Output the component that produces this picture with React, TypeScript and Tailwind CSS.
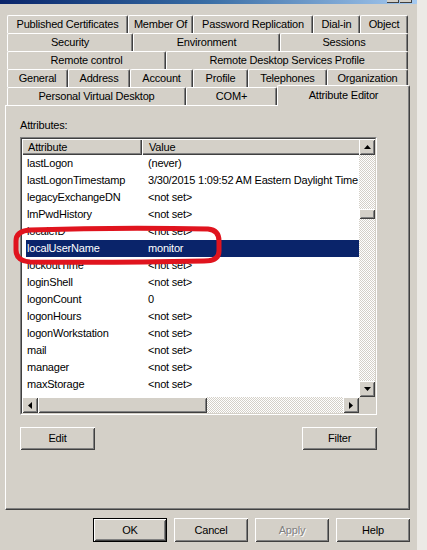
import React from "react";

const raised =
  "bg-[#d4d0c8] shadow-[inset_1px_1px_0_#ffffff,inset_-1px_-1px_0_#404040,inset_2px_2px_0_#d4d0c8,inset_-2px_-2px_0_#808080]";
const checker =
  "bg-[image:repeating-conic-gradient(#ffffff_0%_25%,#d4d0c8_0%_50%)] bg-[length:2px_2px]";
const tab =
  "h-[18px] shrink-0 flex items-center justify-center whitespace-nowrap border-t border-l border-white border-r border-r-[#404040] shadow-[inset_-1px_0_0_#808080] rounded-t-[2px]";

const rows: [string, string][] = [
  ["lastLogon", "(never)"],
  ["lastLogonTimestamp", "3/30/2015 1:09:52 AM Eastern Daylight Time"],
  ["legacyExchangeDN", "<not set>"],
  ["lmPwdHistory", "<not set>"],
  ["localeID", "<not set>"],
  ["localUserName", "monitor"],
  ["lockoutTime", "<not set>"],
  ["loginShell", "<not set>"],
  ["logonCount", "0"],
  ["logonHours", "<not set>"],
  ["logonWorkstation", "<not set>"],
  ["mail", "<not set>"],
  ["manager", "<not set>"],
  ["maxStorage", "<not set>"],
  ["mhsORAddress", "<not set>"],
];

function Up() {
  return (
    <svg width="7" height="4" viewBox="0 0 7 4">
      <polygon points="0,4 7,4 3.5,0" fill="#000" />
    </svg>
  );
}
function Down() {
  return (
    <svg width="7" height="4" viewBox="0 0 7 4">
      <polygon points="0,0 7,0 3.5,4" fill="#000" />
    </svg>
  );
}
function Left() {
  return (
    <svg width="4" height="7" viewBox="0 0 4 7">
      <polygon points="4,0 4,7 0,3.5" fill="#000" />
    </svg>
  );
}
function Right() {
  return (
    <svg width="4" height="7" viewBox="0 0 4 7">
      <polygon points="0,0 0,7 4,3.5" fill="#000" />
    </svg>
  );
}

export default function App() {
  return (
    <div className="w-[427px] h-[550px] bg-[#eceae6] flex overflow-hidden font-['Liberation_Sans',Arial,sans-serif] text-[11px] tracking-[-0.2px] leading-none text-black">
      <div className="relative w-[417px] h-[550px] shrink-0 bg-[#d4d0c8] flex flex-col">
        {/* title strip */}
        <div className="h-[4px] flex bg-linear-to-r from-[#0a246a] via-[#3a6ea5] to-[#a6caf0]">
          <div className="flex-1" />
          <div className="w-[12px] h-[3px] bg-[#d4d0c8] border-r border-b border-[#404040] mr-[1px]" />
          <div className="w-[12px] h-[3px] bg-[#d4d0c8] border-r border-b border-[#404040] mr-[5px]" />
        </div>

        {/* tab rows */}
        <div className="mt-[11px] pl-[7px] flex flex-col">
          <div className="flex h-[18px]">
            <div className={`${tab} w-[121px]`}>Published Certificates</div>
            <div className={`${tab} w-[65px]`}>Member Of</div>
            <div className={`${tab} w-[120px]`}>Password Replication</div>
            <div className={`${tab} w-[47px]`}>Dial-in</div>
            <div className={`${tab} w-[48px]`}>Object</div>
          </div>
          <div className="flex h-[18px]">
            <div className={`${tab} w-[126px]`}>Security</div>
            <div className={`${tab} w-[147px]`}>Environment</div>
            <div className={`${tab} w-[128px]`}>Sessions</div>
          </div>
          <div className="flex h-[18px]">
            <div className={`${tab} w-[159px]`}>Remote control</div>
            <div className={`${tab} w-[242px]`}>Remote Desktop Services Profile</div>
          </div>
          <div className="flex h-[18px]">
            <div className={`${tab} w-[61px]`}>General</div>
            <div className={`${tab} w-[62px]`}>Address</div>
            <div className={`${tab} w-[63px]`}>Account</div>
            <div className={`${tab} w-[55px]`}>Profile</div>
            <div className={`${tab} w-[79px]`}>Telephones</div>
            <div className={`${tab} w-[81px]`}>Organization</div>
          </div>
          <div className="flex h-[18px]">
            <div className={`${tab} w-[179px]`}>Personal Virtual Desktop</div>
            <div className={`${tab} w-[91px]`}>COM+</div>
            <div className="relative z-10 -top-[2px] h-[21px] w-[133px] shrink-0 flex justify-center pt-[4px] bg-[#d4d0c8] border-t border-l border-white border-r border-r-[#404040] shadow-[inset_-1px_0_0_#808080] rounded-t-[2px]">
              Attribute Editor
            </div>
          </div>
        </div>

        {/* panel */}
        <div className="ml-[5px] w-[405px] h-[405px] shrink-0 flex flex-col pl-[14px] border-t border-l border-white border-r border-b border-r-[#404040] border-b-[#404040] shadow-[inset_-1px_-1px_0_#808080]">
          <div className="mt-[13px] h-[13px] leading-[13px]">Attributes:</div>

          {/* listbox */}
          <div className="mt-[5px] w-[357px] h-[278px] border border-t-[#808080] border-l-[#808080] border-r-white border-b-white">
            <div className="w-full h-full border border-t-[#404040] border-l-[#404040] border-r-[#d4d0c8] border-b-[#d4d0c8] flex flex-col">
              <div className="flex h-[258px]">
                <div className="w-[337px] h-[258px] bg-white overflow-hidden flex flex-col">
                  <div className="flex h-[16px] shrink-0">
                    <div className="w-[120px] h-[16px] shrink-0 flex items-center pl-[6px] bg-[#d4d0c8] shadow-[inset_1px_1px_0_#ffffff,inset_-1px_-1px_0_#404040,inset_-2px_-2px_0_#808080]">
                      Attribute
                    </div>
                    <div className="w-[260px] h-[16px] shrink-0 flex items-center pl-[7px] bg-[#d4d0c8] shadow-[inset_1px_1px_0_#ffffff,inset_0_-1px_0_#404040,inset_0_-2px_0_#808080]">
                      Value
                    </div>
                  </div>
                  {rows.map(([a, v]) => {
                    const sel = a === "localUserName";
                    return (
                      <div key={a} className="h-[17px] shrink-0 flex pl-[4px]">
                        <div
                          className={
                            sel
                              ? "flex-1 flex items-center bg-[#0a246a] text-white whitespace-nowrap"
                              : "flex-1 flex items-center whitespace-nowrap"
                          }
                        >
                          <div className="w-[116px] shrink-0 pl-[1px]">{a}</div>
                          <div className="pl-[6px] shrink-0">{v}</div>
                        </div>
                      </div>
                    );
                  })}
                </div>
                {/* vertical scrollbar */}
                <div className="w-[16px] h-[258px] flex flex-col">
                  <div className={`${raised} h-[16px] flex items-center justify-center`}>
                    <Up />
                  </div>
                  <div className={`${checker} flex-1 flex flex-col`}>
                    <div className={`${raised} mt-[54px] h-[10px]`} />
                  </div>
                  <div className={`${raised} h-[16px] flex items-center justify-center`}>
                    <Down />
                  </div>
                </div>
              </div>
              {/* horizontal scrollbar */}
              <div className="flex h-[16px]">
                <div className={`${raised} w-[16px] h-[16px] flex items-center justify-center`}>
                  <Left />
                </div>
                <div className={`${raised} w-[169px] h-[16px]`} />
                <div className={`${checker} flex-1 h-[16px]`} />
                <div className={`${raised} w-[16px] h-[16px] flex items-center justify-center`}>
                  <Right />
                </div>
                <div className="w-[16px] h-[16px] bg-[#d4d0c8]" />
              </div>
            </div>
          </div>

          <div className="mt-[12px] w-[357px] flex justify-between">
            <div className={`${raised} w-[75px] h-[23px] flex items-center justify-center`}>Edit</div>
            <div className={`${raised} w-[75px] h-[23px] flex items-center justify-center`}>Filter</div>
          </div>
        </div>

        {/* bottom buttons */}
        <div className="mt-[8px] flex justify-end gap-[7px] pr-[7px]">
          <div className="w-[74px] h-[24px] border border-black">
            <div className={`${raised} w-full h-full flex items-center justify-center`}>OK</div>
          </div>
          <div className={`${raised} w-[74px] h-[24px] flex items-center justify-center`}>Cancel</div>
          <div className={`${raised} w-[74px] h-[24px] flex items-center justify-center text-[#808080] [text-shadow:1px_1px_0_#ffffff]`}>
            Apply
          </div>
          <div className={`${raised} w-[74px] h-[24px] flex items-center justify-center`}>Help</div>
        </div>

        {/* red annotation */}
        <svg className="absolute left-0 top-0 pointer-events-none" width="417" height="550" viewBox="0 0 417 550">
          <path
            d="M 30 230 Q 120 227 208 229 Q 219 230 219 241 L 219 251 Q 219 261 204 261 Q 110 263 30 262 Q 16 261 16 250 L 16 241 Q 16 231 30 230 Z"
            fill="none"
            stroke="#e0141e"
            strokeWidth="5"
          />
        </svg>
      </div>
    </div>
  );
}
